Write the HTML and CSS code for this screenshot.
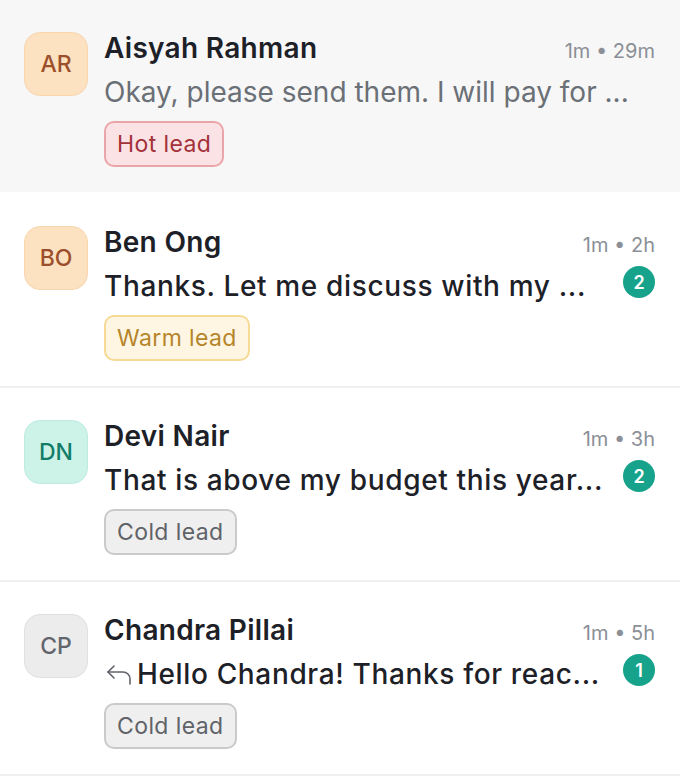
FILE: index.html
```html
<!DOCTYPE html>
<html lang="en">
<head>
    <meta charset="UTF-8">
    <meta name="viewport" content="width=device-width, initial-scale=1.0">
    <title>Inbox</title>
    <link rel="stylesheet" href="styles.css">
</head>
<body>
    <div class="chat-list">
        <div class="chat-item active">
            <div class="avatar peach">AR</div>
            <div class="chat-body">
                <div class="chat-top">
                    <span class="name">Aisyah Rahman</span>
                    <span class="time">1m &bull; 29m</span>
                </div>
                <div class="chat-mid">
                    <span class="preview read">Okay, please send them. I will pay for ...</span>
                </div>
                <span class="tag hot">Hot lead</span>
            </div>
        </div>

        <div class="chat-item">
            <div class="avatar peach">BO</div>
            <div class="chat-body">
                <div class="chat-top">
                    <span class="name">Ben Ong</span>
                    <span class="time">1m &bull; 2h</span>
                </div>
                <div class="chat-mid">
                    <span class="preview">Thanks. Let me discuss with my ...</span>
                    <span class="unread">2</span>
                </div>
                <span class="tag warm">Warm lead</span>
            </div>
        </div>

        <div class="chat-item">
            <div class="avatar mint">DN</div>
            <div class="chat-body">
                <div class="chat-top">
                    <span class="name">Devi Nair</span>
                    <span class="time">1m &bull; 3h</span>
                </div>
                <div class="chat-mid">
                    <span class="preview">That is above my budget this year...</span>
                    <span class="unread">2</span>
                </div>
                <span class="tag cold">Cold lead</span>
            </div>
        </div>

        <div class="chat-item">
            <div class="avatar grey">CP</div>
            <div class="chat-body">
                <div class="chat-top">
                    <span class="name">Chandra Pillai</span>
                    <span class="time">1m &bull; 5h</span>
                </div>
                <div class="chat-mid">
                    <span class="preview"><svg class="reply-icon" viewBox="0 0 26 20" fill="none" stroke="currentColor" stroke-width="1.6" stroke-linecap="round" stroke-linejoin="round"><path d="M8 1 2 7l6 6"></path><path d="M2 7h15a7 7 0 0 1 7 7v5"></path></svg>Hello Chandra! Thanks for reac...</span>
                    <span class="unread">1</span>
                </div>
                <span class="tag cold">Cold lead</span>
            </div>
        </div>
    </div>
</body>
</html>
```

FILE: styles.css
```css
body {
    margin: 0;
    font-family: Inter, "Noto Sans", sans-serif;
    background: #fff;
    color: #1d2127;
}
.chat-item {
    display: flex;
    gap: 16px;
    padding: 30px 25px 25px 24px;
    border-bottom: 2px solid #efefef;
}
.chat-item.active {
    background: #f7f7f7;
    border-bottom-color: #fff;
}
.avatar {
    flex: none;
    width: 62px;
    height: 62px;
    margin-top: 2px;
    border-radius: 16px;
    border: 1px solid transparent;
    display: flex;
    align-items: center;
    justify-content: center;
    font-size: 23px;
    font-weight: 500;
}
.avatar.peach {
    background: #fde2c1;
    border-color: #f8d6ae;
    color: #9c4f2c;
}
.avatar.mint {
    background: #cdf3e9;
    border-color: #bfeadf;
    color: #127d68;
}
.avatar.grey {
    background: #ececec;
    border-color: #e0e0e0;
    color: #62666c;
}
.chat-body {
    flex: 1;
    min-width: 0;
}
.chat-top {
    display: flex;
    align-items: baseline;
    justify-content: space-between;
    height: 36px;
}
.name {
    font-size: 28px;
    line-height: 36px;
    font-weight: 600;
    letter-spacing: 0.3px;
}
.time {
    font-size: 20px;
    color: #8b8f96;
}
.chat-mid {
    display: flex;
    align-items: flex-start;
    justify-content: space-between;
    gap: 12px;
    margin-top: 6px;
    height: 40px;
}
.preview {
    font-size: 28px;
    line-height: 40px;
    font-weight: 500;
    letter-spacing: 0.65px;
    white-space: nowrap;
    overflow: hidden;
}
.preview.read {
    font-weight: 400;
    letter-spacing: 0;
    color: #6b6f76;
}
.reply-icon {
    width: 26px;
    height: 20px;
    margin: 0 5px 0 2px;
    color: #5f6368;
    vertical-align: -1px;
}
.unread {
    flex: none;
    width: 32px;
    height: 32px;
    border-radius: 50%;
    background: #17a38b;
    color: #fff;
    font-size: 18px;
    font-weight: 600;
    display: flex;
    align-items: center;
    justify-content: center;
}
.tag {
    display: inline-block;
    margin-top: 9px;
    height: 42px;
    line-height: 42px;
    padding: 0 11px;
    border: 2px solid;
    border-radius: 10px;
    font-size: 23px;
    letter-spacing: 0.4px;
}
.tag.hot {
    background: #fbe3e5;
    border-color: #eaa5aa;
    color: #a3313a;
}
.tag.warm {
    background: #fef6e2;
    border-color: #f6da95;
    color: #b5852a;
}
.tag.cold {
    background: #efefef;
    border-color: #cacaca;
    color: #5f6368;
}
```
